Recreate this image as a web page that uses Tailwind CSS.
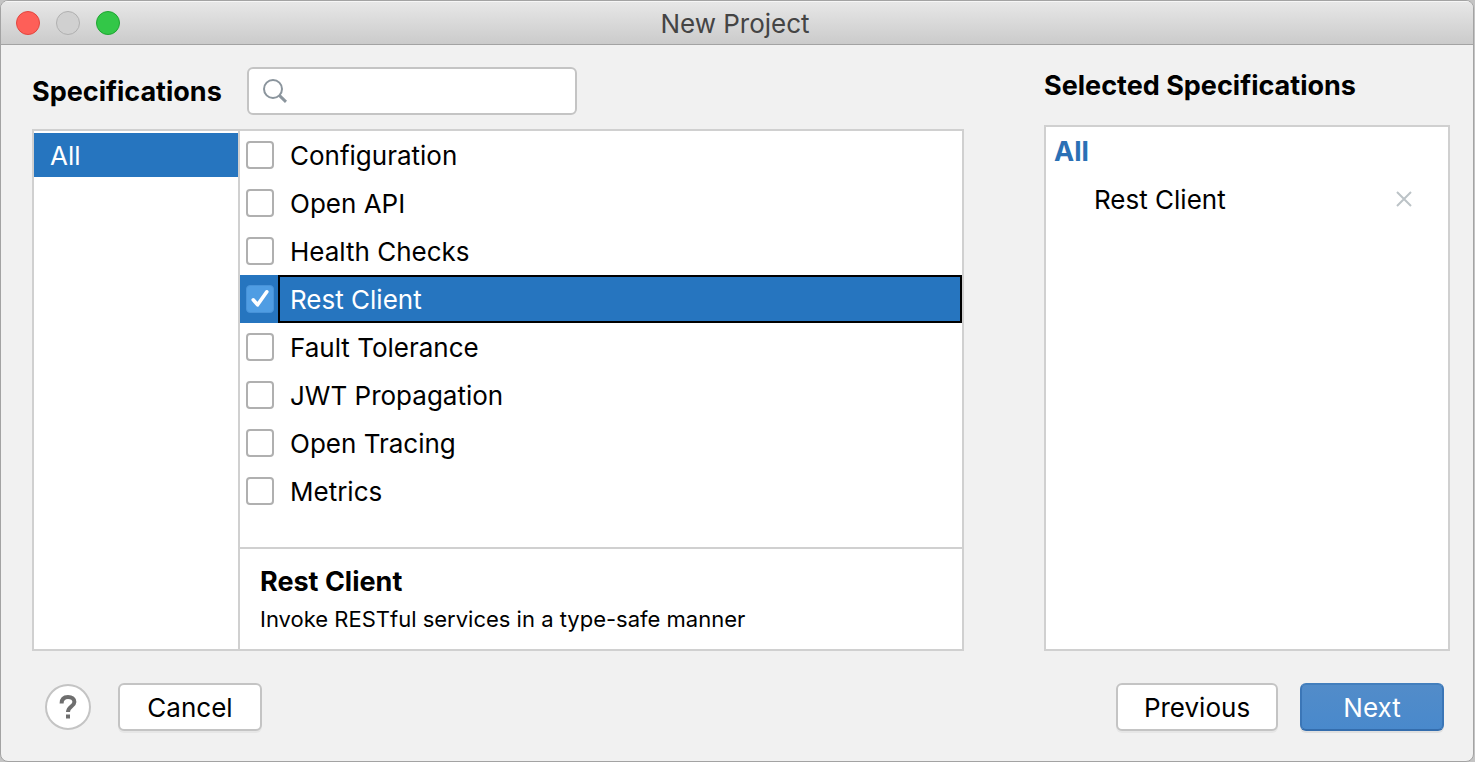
<!DOCTYPE html>
<html lang="en">
<head>
<meta charset="utf-8">
<title>New Project</title>
<script src="https://cdn.jsdelivr.net/npm/@tailwindcss/browser@4"></script>
</head>
<body class="bg-[#c4c4c4]">
<div class="mr-px flex min-h-screen flex-col overflow-hidden rounded-lg border border-[#a3a3a3] bg-[#f1f1f1] font-['Inter',sans-serif] text-[26px] leading-8 text-black">
  <header class="grid h-11 shrink-0 grid-cols-[1fr_auto_1fr] items-center border-b border-[#a3a3a3] border-t border-t-[#f6f6f6] bg-linear-to-b from-[#e7e7e7] to-[#cbcbcb] pr-1">
    <div class="flex gap-4 pl-[15px]">
      <button type="button" aria-label="Close" class="size-6 rounded-full border border-[#e2463f] bg-[#fe5f58]"></button>
      <button type="button" aria-label="Minimize" disabled class="size-6 rounded-full border border-[#b0b0b0] bg-[#d0d0d0]"></button>
      <button type="button" aria-label="Zoom" class="size-6 rounded-full border border-[#1fa532] bg-[#33c748]"></button>
    </div>
    <h1 class="pt-0.5 text-[#444444]">New Project</h1>
    <div></div>
  </header>

  <main class="flex grow gap-20 pl-[31px] pr-[23px]">
    <section class="flex min-w-0 grow flex-col pt-[22px]">
      <div class="flex items-center gap-[25px]">
        <label for="search" class="pt-0.5 text-[27px] font-bold">Specifications</label>
        <div class="relative">
          <input id="search" type="text" class="h-12 w-[330px] rounded-md border-2 border-[#c4c4c4] bg-white pl-12 pr-3 outline-none">
          <svg class="absolute left-4 top-3 size-6" viewBox="0 0 24 24" fill="none" stroke="#8b959d" aria-hidden="true"><circle cx="10" cy="10" r="9" stroke-width="2"/><path d="M16.300 16.300L23 22.800" stroke-width="3"/></svg>
        </div>
      </div>
      <div class="mt-[14px] flex grow border-2 border-[#d0d0d0] bg-white">
        <nav class="w-[206px] shrink-0 border-r-2 border-[#d0d0d0] pt-0.5">
          <a href="#all" class="flex h-11 items-center bg-[#2675bf] pl-4 pt-0.5 text-white">All</a>
        </nav>
        <div class="flex min-w-0 grow flex-col">
          <ul class="grow">
            <li class="flex h-12 items-center pl-1.5"><input id="s1" type="checkbox" class="size-7 appearance-none rounded border-2 border-[#b0b0b0] bg-white"><label for="s1" class="grow pl-4 pt-0.5">Configuration</label></li>
            <li class="flex h-12 items-center pl-1.5"><input id="s2" type="checkbox" class="size-7 appearance-none rounded border-2 border-[#b0b0b0] bg-white"><label for="s2" class="grow pl-4 pt-0.5">Open API</label></li>
            <li class="flex h-12 items-center pl-1.5"><input id="s3" type="checkbox" class="size-7 appearance-none rounded border-2 border-[#b0b0b0] bg-white"><label for="s3" class="grow pl-4 pt-0.5">Health Checks</label></li>
            <li class="flex h-12 items-center bg-[#2675bf] pl-1.5 text-white">
              <span class="relative mr-1 size-7 shrink-0">
                <input id="s4" type="checkbox" checked class="block size-7 appearance-none rounded border border-[#4792d8] bg-[#4f9de3]">
                <svg class="pointer-events-none absolute inset-0 size-7" viewBox="0 0 28 28" fill="none" stroke="white" stroke-width="3.600" stroke-linecap="round" stroke-linejoin="round" aria-hidden="true"><path d="M7.200 14.800L11.600 19.800L20.800 6.800"/></svg>
              </span>
              <label for="s4" class="flex h-12 grow items-center border-2 border-black pl-2.5 pt-0.5">Rest Client</label>
            </li>
            <li class="flex h-12 items-center pl-1.5"><input id="s5" type="checkbox" class="size-7 appearance-none rounded border-2 border-[#b0b0b0] bg-white"><label for="s5" class="grow pl-4 pt-0.5">Fault Tolerance</label></li>
            <li class="flex h-12 items-center pl-1.5"><input id="s6" type="checkbox" class="size-7 appearance-none rounded border-2 border-[#b0b0b0] bg-white"><label for="s6" class="grow pl-4 pt-0.5">JWT Propagation</label></li>
            <li class="flex h-12 items-center pl-1.5"><input id="s7" type="checkbox" class="size-7 appearance-none rounded border-2 border-[#b0b0b0] bg-white"><label for="s7" class="grow pl-4 pt-0.5">Open Tracing</label></li>
            <li class="flex h-12 items-center pl-1.5"><input id="s8" type="checkbox" class="size-7 appearance-none rounded border-2 border-[#b0b0b0] bg-white"><label for="s8" class="grow pl-4 pt-0.5">Metrics</label></li>
          </ul>
          <div class="border-t-2 border-[#d0d0d0] px-5 pb-[14px] pt-4">
            <h2 class="text-[27px] font-bold leading-[34px]">Rest Client</h2>
            <p class="pt-1 text-[22px]">Invoke RESTful services in a type-safe manner</p>
          </div>
        </div>
      </div>
    </section>

    <section class="flex w-[406px] shrink-0 flex-col pt-[25px]">
      <h2 class="text-[27px] font-bold">Selected Specifications</h2>
      <div class="mt-[23px] grow border-2 border-[#d0d0d0] bg-white">
        <h3 class="flex h-12 items-center pl-2 pt-0.5 text-[27px] font-bold text-[#2a70b5]">All</h3>
        <div class="flex h-12 items-center justify-between pl-12 pr-9">
          <span class="pt-0.5">Rest Client</span>
          <button type="button" aria-label="Remove Rest Client"><svg class="size-4" viewBox="0 0 16 16" stroke="#bcc3c7" stroke-width="2" aria-hidden="true"><path d="M1 1L15 15M15 1L1 15"/></svg></button>
        </div>
      </div>
    </section>
  </main>

  <footer class="flex items-center pb-[30px] pl-11 pr-[29px] pt-8">
    <button type="button" aria-label="Help" class="flex size-[46px] items-center justify-center rounded-full border-2 border-[#c4c4c4] bg-white">
      <svg class="size-7" viewBox="0 0 28 28" fill="none" stroke="#6e6e6e" stroke-width="4" aria-hidden="true"><path d="M7.600 10.500C7.600 6 10 4 14 4C18 4 20.400 6.100 20.400 9C20.400 13.200 14 13.400 14 19"/><path d="M14 21.500V25.500"/></svg>
    </button>
    <button type="button" class="ml-[27px] h-12 w-36 rounded-md border-2 border-[#c4c4c4] bg-white pt-0.5 shadow-[0_2px_0_#e6e6e6]">Cancel</button>
    <button type="button" class="ml-auto h-12 w-[162px] rounded-md border-2 border-[#c4c4c4] bg-white pt-0.5 shadow-[0_2px_0_#e6e6e6]">Previous</button>
    <button type="button" class="ml-[22px] h-12 w-36 rounded-md border-2 border-b-[#346dad] border-x-[#3b76b7] border-t-[#437fbd] bg-linear-to-b from-[#528cc9] to-[#4989cc] pt-0.5 text-white shadow-[0_2px_0_#e0e0e0]">Next</button>
  </footer>
</div>
</body>
</html>
